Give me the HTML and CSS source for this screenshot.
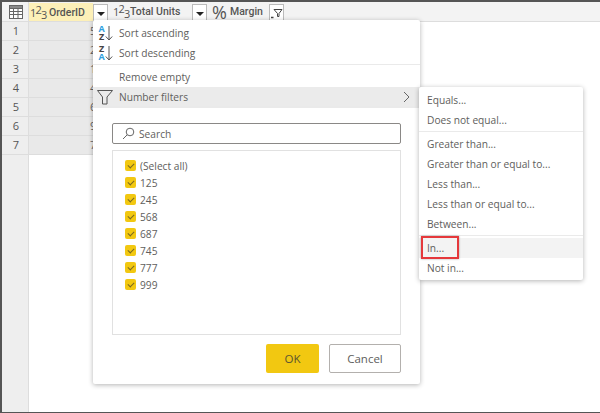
FILE: index.html
```html
<!DOCTYPE html>
<html lang="en">
<head>
  <meta charset="UTF-8">
  <title>Number filters</title>
  <link rel="stylesheet" href="styles.css">
</head>
<body>

<div class="frame">
  <div class="head">
    <div class="corner">
      <svg width="16" height="16" viewBox="0 0 16 16" fill="none" stroke="#666" stroke-width="1">
        <rect x="1.5" y="1.5" width="13" height="13" fill="#fff"/>
        <rect x="1.5" y="1.5" width="13" height="3" fill="#8a8a8a"/>
        <path d="M1.5 7.5h13M1.5 10.5h13M5.5 4.5v10M10 4.5v10"/>
      </svg>
    </div>
    <div class="col col-order">
      <span class="type">1<span class="up">2</span><span class="down">3</span></span>
      <span class="col-name">OrderID</span>
    </div>
    <div class="drop"><span class="caret"></span></div>
    <div class="col col-units">
      <span class="type">1<span class="up">2</span><span class="down">3</span></span>
      <span class="col-name">Total Units</span>
    </div>
    <div class="drop"><span class="caret"></span></div>
    <div class="col col-margin">
      <span class="pct">%</span>
      <span class="col-name">Margin</span>
    </div>
    <div class="drop drop-filter">
      <svg width="13" height="13" viewBox="0 0 13 13" fill="none" stroke="#444">
        <path d="M4 2.500h8L9 6.500v3H7.500v-3z"/>
        <path d="M1 10.500h2.500" stroke-width="1.500"/>
      </svg>
    </div>
  </div>

  <div class="rows">
    <div class="row"><span class="num">1</span><span class="val">568</span></div>
    <div class="row"><span class="num">2</span><span class="val">245</span></div>
    <div class="row"><span class="num">3</span><span class="val">125</span></div>
    <div class="row"><span class="num">4</span><span class="val">477</span></div>
    <div class="row"><span class="num">5</span><span class="val">687</span></div>
    <div class="row"><span class="num">6</span><span class="val">999</span></div>
    <div class="row"><span class="num">7</span><span class="val">745</span></div>
    <div class="row-rest"></div>
  </div>

  <div class="menu">
    <div class="item item-icon">
      <span class="sort"><span class="blue">A</span><span class="dark">Z</span></span>
      <svg class="arrow" width="8" height="16" viewBox="0 0 8 16" fill="none" stroke="#555"><path d="M4 1v14M.8 11.500 4 15l3.200-3.500"/></svg>
      <span class="label">Sort ascending</span>
    </div>
    <div class="item item-icon">
      <span class="sort"><span class="dark">Z</span><span class="blue">A</span></span>
      <svg class="arrow" width="8" height="16" viewBox="0 0 8 16" fill="none" stroke="#555"><path d="M4 1v14M.8 11.500 4 15l3.200-3.500"/></svg>
      <span class="label">Sort descending</span>
    </div>
    <div class="sep"></div>
    <div class="item item-icon"><span class="label">Remove empty</span></div>
    <div class="item item-icon item-on">
      <svg class="funnel" width="16" height="16" viewBox="0 0 16 16" fill="none" stroke="#555"><path d="M.5 1.500h15l-5.500 6.500v7H5.500V8z"/></svg>
      <span class="label">Number filters</span>
      <svg class="chev" width="7" height="12" viewBox="0 0 7 12" fill="none" stroke="#666"><path d="m1 1 5 5-5 5"/></svg>
    </div>
    <div class="sep-wide"></div>

    <div class="panel">
      <div class="search">
        <svg width="13" height="13" viewBox="0 0 13 13" fill="none" stroke="#666"><circle cx="8" cy="5" r="3.800"/><path d="M5.200 7.800 1 12"/></svg>
        <span>Search</span>
      </div>
      <div class="list">
        <div class="check"><span class="box"></span>(Select all)</div>
        <div class="check"><span class="box"></span>125</div>
        <div class="check"><span class="box"></span>245</div>
        <div class="check"><span class="box"></span>568</div>
        <div class="check"><span class="box"></span>687</div>
        <div class="check"><span class="box"></span>745</div>
        <div class="check"><span class="box"></span>777</div>
        <div class="check"><span class="box"></span>999</div>
      </div>
      <div class="buttons">
        <button class="btn btn-ok">OK</button>
        <button class="btn btn-cancel">Cancel</button>
      </div>
    </div>
  </div>

  <div class="submenu">
    <div class="sub">Equals...</div>
    <div class="sub">Does not equal...</div>
    <div class="sep"></div>
    <div class="sub">Greater than...</div>
    <div class="sub">Greater than or equal to...</div>
    <div class="sub">Less than...</div>
    <div class="sub">Less than or equal to...</div>
    <div class="sub">Between...</div>
    <div class="sep"></div>
    <div class="sub sub-on">In...<span class="redbox"></span></div>
    <div class="sub">Not in...</div>
  </div>
</div>

</body>
</html>
```

FILE: styles.css
```css
* {
  box-sizing: border-box;
}
body {
  margin: 0;
  font-family: 'Open Sans', sans-serif;
  font-size: 10.2px;
  color: #605e5c;
  background: #fff;
}
.frame {
  position: relative;
  width: 600px;
  height: 413px;
  border-top: 2px solid #555;
  border-left: 2px solid #555;
  border-bottom: 1px solid #555;
  overflow: hidden;
}

.head {
  display: flex;
  height: 20px;
  background: #f3f3f3;
  border-bottom: 1px solid #ddd;
}
.corner {
  width: 27px;
  display: flex;
  align-items: center;
  justify-content: center;
  padding-left: 1px;
  border-right: 1px solid #ddd;
}
.col {
  display: flex;
  align-items: center;
  color: #555;
  font-family: Roboto, sans-serif;
  font-size: 10.5px;
  font-weight: 500;
}
.col-order {
  width: 64px;
  background: #fdf0b8;
  margin-top: 1px;
}
.col-units {
  width: 84px;
  padding-left: 4px;
}
.col-margin {
  width: 62px;
  padding-left: 5px;
}
.type {
  width: 19px;
  margin-left: 1px;
  font-family: 'Open Sans', sans-serif;
  font-size: 11px;
  font-weight: 400;
  letter-spacing: -0.800px;
  color: #555;
  white-space: nowrap;
}
.up {
  position: relative;
  top: -3px;
}
.down {
  position: relative;
  top: 2px;
}
.col-units .type {
  width: 17px;
}
.pct {
  width: 18px;
  font-family: 'Open Sans', sans-serif;
  font-size: 18px;
  font-weight: 400;
  color: #555;
}
.drop {
  width: 15px;
  height: 18px;
  margin-top: 2px;
  display: flex;
  align-items: center;
  justify-content: center;
  background: #fff;
  border: 1px solid #bbb;
  border-bottom: 0;
}
.caret {
  width: 0;
  height: 0;
  border-left: 4px solid transparent;
  border-right: 4px solid transparent;
  border-top: 4px solid #222;
}

.rows {
  display: flex;
  flex-direction: column;
  height: 390px;
}
.row {
  display: flex;
  height: 19px;
  flex: none;
}
.num {
  width: 27px;
  background: #eee;
  text-align: center;
  line-height: 18px;
  font-size: 11px;
  color: #555;
  padding-left: 2px;
  border-right: 1px solid #ddd;
  border-bottom: 1px solid #ddd;
}
.val {
  width: 64px;
  background: #e9e9e9;
  padding-left: 61px;
  overflow: hidden;
  white-space: nowrap;
  line-height: 18px;
  font-size: 11px;
  color: #666;
  border-bottom: 1px solid #ddd;
}
.row-rest {
  flex: 1;
  width: 27px;
  background: #eee;
  border-right: 1px solid #ddd;
}

/* dropdown over the table */
.menu {
  position: absolute;
  left: 91px;
  top: 18px;
  width: 327px;
  height: 364px;
  background: #fff;
  border-radius: 2px;
  box-shadow: 0 1px 5px rgba(0, 0, 0, 0.3);
  padding-top: 3px;
}
.item {
  position: relative;
  height: 20px;
  display: flex;
  align-items: center;
}
.item-icon .label {
  position: absolute;
  left: 26px;
}
.sort {
  display: flex;
  flex-direction: column;
  width: 9px;
  margin-left: 4px;
  font-size: 9px;
  font-weight: 700;
  line-height: 8px;
  text-align: center;
}
.blue {
  color: #2f9fe0;
}
.dark {
  color: #444;
}
.arrow {
  margin-left: -1px;
}
.sep {
  height: 1px;
  background: #eaeaea;
  margin: 1px 0 2px;
}
.item-on {
  background: #ebebeb;
  height: 19px;
}
.funnel {
  margin-left: 4px;
}
.chev {
  position: absolute;
  right: 10px;
}
.sep-wide {
  height: 2px;
  background: #eaeaea;
}
.panel {
  padding: 15px 19px 0;
}
.search {
  height: 21px;
  display: flex;
  align-items: center;
  gap: 4px;
  padding-left: 9px;
  border: 1px solid #8a8886;
  border-radius: 2px;
}
.list {
  height: 185px;
  margin-top: 6px;
  padding-top: 6px;
  border: 1px solid #e1e1e1;
}
.check {
  height: 17px;
  display: flex;
  align-items: center;
  gap: 4px;
  padding-left: 12px;
}
.box {
  position: relative;
  width: 11px;
  height: 11px;
  background: #f2c811;
  border-radius: 2px;
}
.box::after {
  content: '';
  position: absolute;
  left: 3px;
  top: 3px;
  width: 5px;
  height: 3px;
  border-left: 1px solid #7a6a20;
  border-bottom: 1px solid #7a6a20;
  transform: rotate(-45deg);
}
.buttons {
  display: flex;
  justify-content: flex-end;
  gap: 10px;
  margin-top: 9px;
}
.btn {
  height: 29px;
  font-family: inherit;
  font-size: 11.5px;
  color: #605e5c;
  border-radius: 2px;
  padding: 0;
}
.btn-ok {
  width: 53px;
  background: #f2c811;
  border: 0;
  color: #5c5430;
}
.btn-cancel {
  width: 72px;
  background: #fff;
  border: 1px solid #b3b0ad;
}

.submenu {
  position: absolute;
  left: 417px;
  top: 85px;
  width: 164px;
  height: 193px;
  background: #fff;
  border-radius: 2px;
  box-shadow: 0 1px 5px rgba(0, 0, 0, 0.3);
  padding-top: 3px;
}
.sub {
  position: relative;
  height: 20px;
  line-height: 20px;
  padding-left: 8px;
}
.sub-on {
  background: #f3f3f3;
}
.redbox {
  position: absolute;
  left: 2px;
  top: -2px;
  width: 38px;
  height: 23px;
  border: 2px solid #e5383b;
  box-shadow: 0 0 2px rgba(0, 0, 0, 0.35);
}
```
